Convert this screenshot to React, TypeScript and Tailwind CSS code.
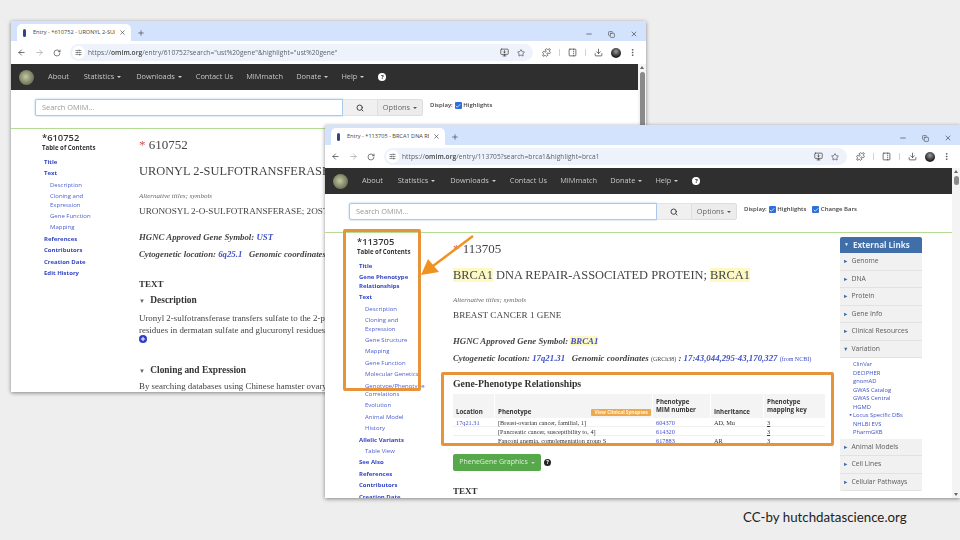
import React from 'react';
import {
  ArrowLeft, ArrowRight, RotateCw, SlidersHorizontal, MonitorDown, Star, Puzzle, Download,
  EllipsisVertical, Minus, Copy, X, Plus, Search, PanelRightDashed, Check,
} from 'lucide-react';

const sans = 'font-["Open_Sans","Liberation_Sans",sans-serif]';
const serif = 'font-["Liberation_Serif",serif]';

const Caret = ({ dark }: { dark?: boolean }) => (
  <span className={`ml-[3px] inline-block h-0 w-0 border-x-[2px] border-t-[2.5px] border-x-transparent align-middle ${dark ? 'border-t-[#555]' : 'border-t-[#cfcfcf]'}`} />
);

const Tick = () => (
  <span className="flex h-[7px] w-[7px] items-center justify-center rounded-[1px] bg-[#2f6fdb]">
    <Check size={6} strokeWidth={3} className="text-white" />
  </span>
);

const Logo = () => (
  <div className="h-[15px] w-[15px] shrink-0 rounded-full bg-[radial-gradient(circle_at_45%_45%,#c9c7a4_0%,#8b9170_45%,#4b5240_100%)]" />
);

const HelpDot = () => (
  <span className="flex h-2 w-2 shrink-0 items-center justify-center rounded-full bg-white text-[6px] leading-none font-bold text-[#2f2f2f]">?</span>
);

function Browser({ title, url, host, children, extraBar }: {
  title: string; url: string; host: string; children: React.ReactNode; extraBar?: boolean;
}) {
  const rest = url.replace(host, '');
  return (
    <div className={`flex h-full flex-col overflow-hidden bg-white shadow-[0_1px_4px_rgba(0,0,0,0.45)] blur-[0.45px] ${sans}`}>
      {/* tab strip */}
      <div className="flex h-5 shrink-0 items-end bg-[#d3e3fd] pl-[6px]">
        <div className="flex h-[17px] w-[114px] items-center rounded-t-[5px] bg-white pl-[6px] pr-[5px]">
          <span className="h-[8px] w-[3px] rounded-sm bg-[#33457a]" />
          <span className="ml-[7px] w-[82px] overflow-hidden whitespace-nowrap text-[5.6px] text-[#444]">{title}</span>
          <X size={7} className="ml-auto text-[#333]" />
        </div>
        <Plus size={8} className="mb-[4px] ml-[6px] text-[#444]" />
        <div className="mb-[3px] ml-auto flex items-center gap-[15px] pr-[8px] text-[#444]">
          <Minus size={8} />
          <Copy size={7} />
          <X size={8} />
        </div>
      </div>
      {/* toolbar */}
      <div className="flex h-[23px] shrink-0 items-center pl-[6px] text-[#444]">
        <ArrowLeft size={9} />
        <ArrowRight size={9} className="ml-[9px] text-[#aaa]" />
        <RotateCw size={8} className="ml-[9px]" />
        <div className="ml-[9px] flex h-[17px] w-[463px] items-center rounded-full bg-[#edf2fb] pl-[2px] pr-[8px]">
          <span className="flex h-[13px] w-[13px] items-center justify-center rounded-full bg-white">
            <SlidersHorizontal size={7} />
          </span>
          <span className="ml-[3px] text-[6.6px] tracking-[0.01em] text-[#5b5f68]">
            https://<span className="font-semibold text-[#3c4043]">{host}</span>{rest}
          </span>
          <MonitorDown size={9} className="ml-auto" />
          <Star size={8} className="ml-[8px]" />
        </div>
        <Puzzle size={9} className="ml-[9px]" />
        <span className="ml-[8px] h-[7px] w-px bg-[#c9d3e6]" />
        <PanelRightDashed size={9} className="ml-[8px]" />
        <span className="ml-[8px] h-[7px] w-px bg-[#c9d3e6]" />
        <Download size={9} className="ml-[8px]" />
        <span className="ml-[8px] h-[10px] w-[10px] rounded-full bg-[radial-gradient(circle_at_50%_35%,#9a9a9a_0%,#222_65%)]" />
        <EllipsisVertical size={9} className="ml-[7px]" />
      </div>
      {/* page + scrollbar */}
      <div className="flex min-h-0 flex-1">
        <div className="min-w-0 flex-1">
          <nav className="flex h-[26px] items-center bg-[#2f2f2f] pl-[8px] text-[7.4px] text-[#c4c4c4]">
            <Logo />
            <span className="ml-[14px]">About</span>
            <span className="ml-[15px]">Statistics<Caret /></span>
            <span className="ml-[15px]">Downloads<Caret /></span>
            <span className="ml-[14px]">Contact Us</span>
            <span className="ml-[13px]">MIMmatch</span>
            <span className="ml-[13px]">Donate<Caret /></span>
            <span className="ml-[13px]">Help<Caret /></span>
            <span className="ml-[14px]"><HelpDot /></span>
          </nav>
          <div className="flex h-[39px] items-start border-b border-[#b5dc93] pl-[24px] pt-[9px]">
            <div className="flex h-[17px] w-[308px] items-center rounded-l-[2px] border border-[#a9c8ec] bg-white pl-[6px] text-[7.4px] text-[#9a9a9a] shadow-[0_0_2px_rgba(102,175,233,0.7)]">
              Search OMIM...
            </div>
            <div className="flex h-[17px] w-[34px] items-center justify-center border-y border-[#e3e3e3] bg-[#f0f0f0]">
              <Search size={8} strokeWidth={3} className="text-[#444]" />
            </div>
            <div className="flex h-[17px] w-[46px] items-center justify-center rounded-r-[2px] border border-[#dedede] bg-[#ececec] text-[7.4px] text-[#666]">
              Options<Caret dark />
            </div>
            <div className="ml-[7px] mt-[2px] flex items-center text-[6px] font-semibold text-[#444]">
              <span>Display:</span>
              <span className="ml-[2px]"><Tick /></span>
              <span className="ml-[1.5px]">Highlights</span>
              {extraBar && (
                <>
                  <span className="ml-[6px]"><Tick /></span>
                  <span className="ml-[1.5px]">Change Bars</span>
                </>
              )}
            </div>
          </div>
          {children}
        </div>
        <div className="relative w-2 shrink-0 bg-[#f4f4f4]">
          <span className="absolute left-[2px] top-[2px] h-0 w-0 border-x-[2px] border-b-[3px] border-x-transparent border-b-[#666]" />
          <span className="absolute left-[1.5px] top-[8px] h-[60px] w-[5px] rounded-full bg-[#8a8a8a] data-[short=true]:h-[9px]" data-short={extraBar ? 'true' : 'false'} />
          <span className="absolute bottom-[2px] left-[2px] h-0 w-0 border-x-[2px] border-t-[3px] border-x-transparent border-t-[#666]" />
        </div>
      </div>
    </div>
  );
}

type TocItem = { label: string; sub?: boolean };

function Toc({ mim, items }: { mim: string; items: TocItem[] }) {
  return (
    <div className="w-[76px] shrink-0">
      <div className="text-[9.4px] leading-[10px] font-semibold text-[#333]">*{mim}</div>
      <div className="mt-[1px] text-[6.1px] leading-[7.5px] font-bold whitespace-nowrap text-[#333]">Table of Contents</div>
      <div className="mt-[6.5px] flex w-[62px] flex-col gap-[2.9px] pl-[2px]">
        {items.map((it) => (
          <div
            key={it.label}
            className={it.sub
              ? 'pl-[6px] text-[6px] leading-[8.5px] text-[#4c5fd0]'
              : 'text-[6px] leading-[8.5px] font-bold text-[#3346c4]'}
          >
            {it.label}
          </div>
        ))}
      </div>
    </div>
  );
}

const Mark = ({ children }: { children: React.ReactNode }) => (
  <span className="bg-[#fdf9c4]">{children}</span>
);

function BackPage() {
  const toc: TocItem[] = [
    { label: 'Title' }, { label: 'Text' }, { label: 'Description', sub: true },
    { label: 'Cloning and Expression', sub: true }, { label: 'Gene Function', sub: true },
    { label: 'Mapping', sub: true }, { label: 'References' }, { label: 'Contributors' },
    { label: 'Creation Date' }, { label: 'Edit History' },
  ];
  return (
    <div className="flex pl-[31px] pt-[4px]">
      <Toc mim="610752" items={toc} />
      <div className={`ml-[21px] whitespace-nowrap text-[#444] ${serif}`}>
        <div className="mt-[4px] text-[13px] leading-[16px]"><span className="text-[#d9534f]">*</span> 610752</div>
        <div className="mt-[9px] text-[12.4px] leading-[18px]">URONYL 2-SULFOTRANSFERASE; UST</div>
        <div className="mt-[12px] text-[7px] leading-[8px] italic text-[#666]">Alternative titles; symbols</div>
        <div className="mt-[6px] text-[9.2px] leading-[11px]">URONOSYL 2-O-SULFOTRANSFERASE; 2OST</div>
        <div className="mt-[15px] text-[8.8px] leading-[11px] font-bold italic">
          HGNC Approved Gene Symbol: <span className="text-[#4050c8]">UST</span>
        </div>
        <div className="mt-[6px] text-[8.8px] leading-[11px] font-bold italic">
          Cytogenetic location: <span className="text-[#4050c8]">6q25.1</span>&nbsp;&nbsp; Genomic coordinates
        </div>
        <div className="mt-[19px] text-[9px] leading-[11px] font-bold text-[#333]">TEXT</div>
        <div className="mt-[4px] text-[9.4px] leading-[12px] font-bold text-[#333]"><span className="mr-[3px] text-[6px] text-[#666]">▼</span> Description</div>
        <div className="mt-[5px] text-[8.9px] leading-[12px]">Uronyl 2-sulfotransferase transfers sulfate to the 2-position of</div>
        <div className="text-[8.9px] leading-[12px]">residues in dermatan sulfate and glucuronyl residues</div>
        <div className="-mt-[1px] flex h-2 w-2 items-center justify-center rounded-full bg-[#2b3cc4]">
          <Plus size={6} strokeWidth={4} className="text-white" />
        </div>
        <div className="mt-[21px] text-[9.4px] leading-[12px] font-bold text-[#333]"><span className="mr-[3px] text-[6px] text-[#666]">▼</span> Cloning and Expression</div>
        <div className="mt-[3px] text-[8.9px] leading-[12px]">By searching databases using Chinese hamster ovary</div>
      </div>
    </div>
  );
}

const rows = [
  ['[Breast-ovarian cancer, familial, 1]', '604370', 'AD, Mu', '3'],
  ['[Pancreatic cancer, susceptibility to, 4]', '614320', '', '3'],
  ['Fanconi anemia, complementation group S', '617883', 'AR', '3'],
];

function GeneTable() {
  return (
    <div className="mt-[4px] h-[49px] w-[372px] overflow-hidden text-[#333]">
      <div className="grid h-6 grid-cols-[42px_158px_58px_53px_61px] items-end bg-[#f4f4f4] text-[6.2px] leading-[8px] font-bold">
        <div className="h-full border-r border-white pb-[3px] pl-[3px] pt-[14px]">Location</div>
        <div className="flex h-full items-end justify-between border-r border-white pb-[3px] pl-[3px] pr-[1px]">
          <span>Phenotype</span>
          <span className="rounded-[1px] bg-[#eea94a] px-[3px] py-px text-[4.8px] leading-[5px] text-[#fff3dc]">View Clinical Synopses</span>
        </div>
        <div className="h-full border-r border-white pb-[3px] pl-[3px] pt-[4px]">Phenotype<br />MIM number</div>
        <div className="h-full border-r border-white pb-[3px] pl-[3px] pt-[14px]">Inheritance</div>
        <div className="h-full pb-[3px] pl-[3px] pt-[4px]">Phenotype<br />mapping key</div>
      </div>
      {rows.map((r, i) => (
        <div key={r[1]} className={`grid h-[9px] grid-cols-[42px_158px_58px_53px_61px] border-b border-[#f0f0f0] text-[6.3px] leading-[9px] whitespace-nowrap ${serif}`}>
          <div className="pl-[3px] text-[#4050c8]">{i === 0 ? '17q21.31' : ''}</div>
          <div className="pl-[3px]">{r[0]}</div>
          <div className="pl-[3px] text-[#4050c8]">{r[1]}</div>
          <div className="pl-[3px]">{r[2]}</div>
          <div className="pl-[3px] underline">{r[3]}</div>
        </div>
      ))}
    </div>
  );
}

const Panel = ({ label, open }: { label: string; open?: boolean }) => (
  <div className="flex h-[17.5px] items-center border-b border-[#e2e2e2] bg-[#f1f1f1] pl-[3px] text-[6.8px] text-[#5c5c5c]">
    <span className="mr-[3px] text-[5.5px] text-[#3a6ea5]">{open ? '▼' : '►'}</span>
    {label}
  </div>
);

function ExternalLinks() {
  const links = ['ClinVar', 'DECIPHER', 'gnomAD', 'GWAS Catalog', 'GWAS Central', 'HGMD', 'Locus Specific DBs', 'NHLBI EVS', 'PharmGKB'];
  return (
    <div className="w-[82px] shrink-0 self-start overflow-hidden rounded-[2px]">
      <div className="flex h-[16px] items-center bg-[#3f6ea8] pl-[4px] text-[8px] font-bold text-[#e8eef7]">
        <span className="mr-[4px] text-[5px]">▼</span>External Links
      </div>
      {['Genome', 'DNA', 'Protein', 'Gene Info', 'Clinical Resources'].map((l) => <Panel key={l} label={l} />)}
      <Panel label="Variation" open />
      <div className="py-[2px] pl-[13px] text-[5.8px] leading-[8.5px] text-[#3f52c8]">
        {links.map((l) => (
          <div key={l} className="relative">
            {l === 'Locus Specific DBs' && <span className="absolute -left-[4px] text-[4px]">►</span>}
            {l}
          </div>
        ))}
      </div>
      {['Animal Models', 'Cell Lines', 'Cellular Pathways'].map((l) => <Panel key={l} label={l} />)}
    </div>
  );
}

function FrontPage() {
  const toc: TocItem[] = [
    { label: 'Title' }, { label: 'Gene Phenotype Relationships' }, { label: 'Text' },
    { label: 'Description', sub: true }, { label: 'Cloning and Expression', sub: true },
    { label: 'Gene Structure', sub: true }, { label: 'Mapping', sub: true },
    { label: 'Gene Function', sub: true }, { label: 'Molecular Genetics', sub: true },
    { label: 'Genotype/Phenotype Correlations', sub: true }, { label: 'Evolution', sub: true },
    { label: 'Animal Model', sub: true }, { label: 'History', sub: true },
    { label: 'Allelic Variants' }, { label: 'Table View', sub: true }, { label: 'See Also' },
    { label: 'References' }, { label: 'Contributors' }, { label: 'Creation Date' },
  ];
  return (
    <div className="flex h-[265px] overflow-hidden pl-[32px] pt-[4px]">
      <Toc mim="113705" items={toc} />
      <div className="ml-[20px] w-[387px] shrink-0 whitespace-nowrap text-[#444]">
        <div className={serif}>
          <div className="mt-[4px] text-[13px] leading-[16px]"><span className="text-[#d9534f]">*</span> 113705</div>
          <div className="mt-[9px] text-[12.4px] leading-[18px]"><Mark>BRCA1</Mark> DNA REPAIR-ASSOCIATED PROTEIN; <Mark>BRCA1</Mark></div>
          <div className="mt-[12px] text-[7px] leading-[8px] italic text-[#666]">Alternative titles; symbols</div>
          <div className="mt-[6px] text-[9.2px] leading-[11px]">BREAST CANCER 1 GENE</div>
          <div className="mt-[15px] text-[8.8px] leading-[11px] font-bold italic">
            HGNC Approved Gene Symbol: <span className="text-[#4050c8]"><Mark>BRCA1</Mark></span>
          </div>
          <div className="mt-[6px] text-[8.8px] leading-[11px] font-bold italic">
            Cytogenetic location: <span className="text-[#4050c8]">17q21.31</span>&nbsp;&nbsp; Genomic coordinates <span className="text-[6px] not-italic font-normal">(GRCh38)</span> : <span className="text-[#4050c8]">17:43,044,295-43,170,327</span> <span className="text-[6px] font-normal not-italic text-[#4050c8]">(from NCBI)</span>
          </div>
          <div className="mt-[13px] text-[9.8px] leading-[12px] font-bold text-[#333]">Gene-Phenotype Relationships</div>
        </div>
        <GeneTable />
        <div className="mt-[11px] flex items-center">
          <div className="flex h-[17px] w-[88px] items-center justify-center rounded-[2px] bg-[#57a84a] text-[7px] text-[#dcefd8]">
            PheneGene Graphics<Caret />
          </div>
          <span className="ml-[3px] flex h-[7px] w-[7px] items-center justify-center rounded-full bg-[#222] text-[5.5px] font-bold text-white">?</span>
        </div>
        <div className={`mt-[15px] text-[9px] leading-[11px] font-bold text-[#333] ${serif}`}>TEXT</div>
      </div>
      <ExternalLinks />
    </div>
  );
}

export default function App() {
  return (
    <div className="relative h-[540px] w-[960px] overflow-hidden bg-[#eeeeee]">
      <div className="absolute left-[11px] top-[21px] h-[371px] w-[635px]">
        <Browser
          title="Entry - *610752 - URONYL 2-SULFOTRANSFERASE"
          host="omim.org"
          url='omim.org/entry/610752?search="ust%20gene"&highlight="ust%20gene"'
        >
          <BackPage />
        </Browser>
      </div>
      <div className="absolute left-[325px] top-[125px] h-[373px] w-[635px]">
        <Browser
          title="Entry - *113705 - BRCA1 DNA REPAIR"
          host="omim.org"
          url="omim.org/entry/113705?search=brca1&highlight=brca1"
          extraBar
        >
          <FrontPage />
        </Browser>
      </div>

      {/* orange callouts */}
      <div className="absolute left-[343px] top-[229px] h-[162px] w-[78px] rounded-[2px] border-[3px] border-[#e8923a]" />
      <div className="absolute left-[441px] top-[372px] h-[74px] w-[393px] rounded-[2px] border-[3px] border-[#e8923a]" />
      <svg className="absolute left-[415px] top-[230px]" width="64" height="52" viewBox="0 0 64 52">
        <line x1="58" y1="6" x2="14" y2="39" stroke="#f0921e" strokeWidth="2.4" />
        <polygon points="6,45 13,29 24,42" fill="#f0921e" />
      </svg>

      <div className='absolute left-[743px] top-[509px] font-["Lato",sans-serif] text-[13.3px] leading-[16px] text-[#222]'>
        CC-by hutchdatascience.org
      </div>
    </div>
  );
}
